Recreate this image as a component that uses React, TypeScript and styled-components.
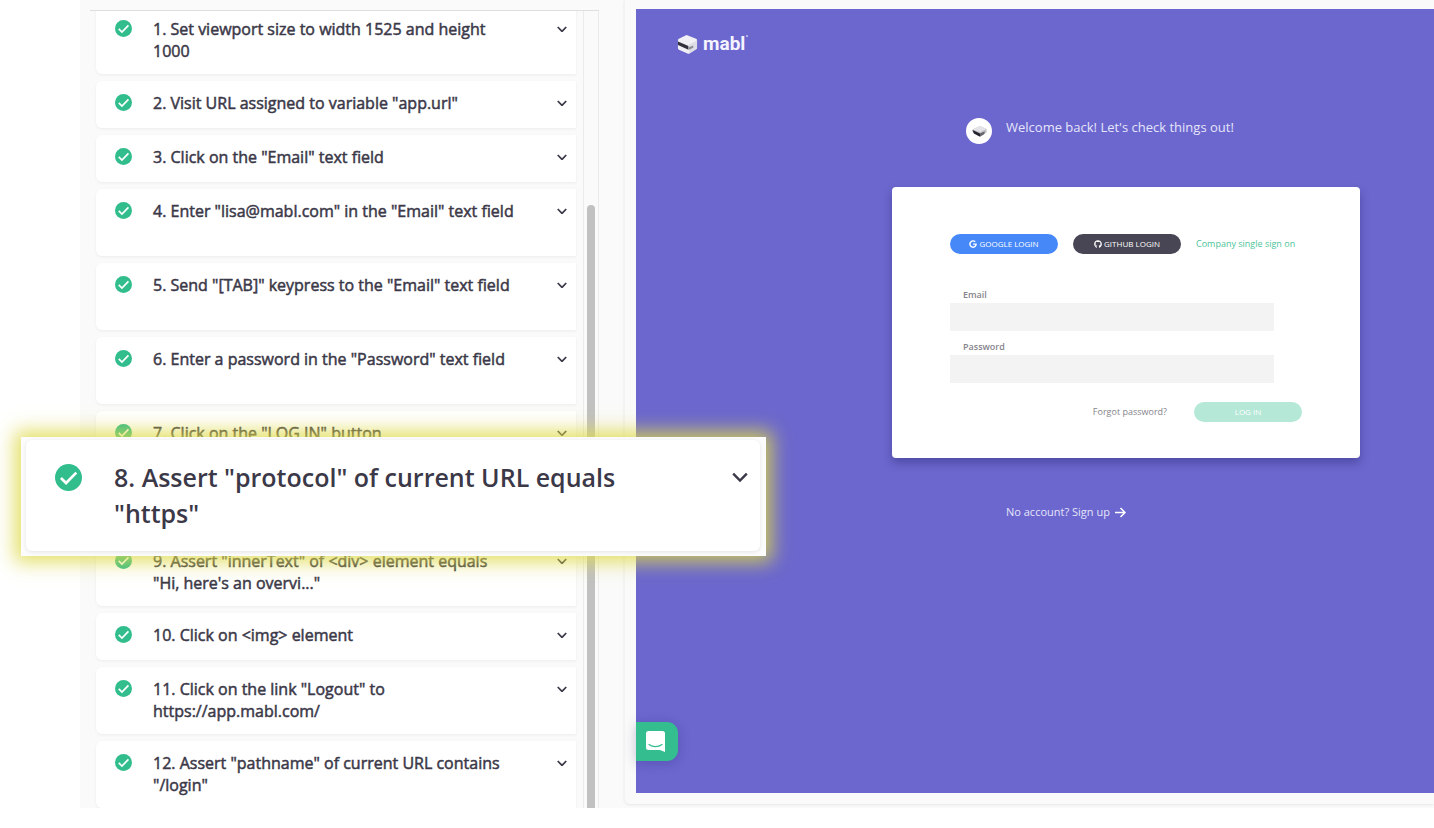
import React from "react";
import styled, { createGlobalStyle, css } from "styled-components";
import { FaGithub, FaGoogle } from "react-icons/fa";

const GlobalStyle = createGlobalStyle`
  *, *::before, *::after { box-sizing: border-box; }
  body {
    margin: 0;
    background: #fff;
    color: #3b3848;
    font-family: "Open Sans", "Noto Sans", sans-serif;
  }
  button, input { font: inherit; }
`;

const Page = styled.div`
  position: relative;
  height: 100vh;
  padding: 0 0 20px 80px;
  overflow: hidden;
`;

const Workspace = styled.div`
  display: grid;
  grid-template-columns: 544px minmax(0, 1fr);
  grid-template-rows: minmax(0, 1fr);
  height: 100%;
  overflow: hidden;
  background: #fafafa;
`;

const StepPanel = styled.section`
  display: flex;
  gap: 7px;
  margin: 10px 25px 0 10px;
  padding-left: 6px;
  border-top: 1px solid #dedede;
  overflow: hidden;
`;

const StepList = styled.ol`
  flex: 1;
  display: flex;
  flex-direction: column;
  gap: 7px;
  margin: -4px 0 0;
  padding: 0;
  list-style: none;
`;

const Step = styled.li<{ $tall?: boolean }>`
  flex: none;
  display: flex;
  align-items: flex-start;
  min-height: ${(p) => (p.$tall ? 67 : 47)}px;
  padding: 11px 7px 12px 19px;
  border-radius: 6px 0 0 6px;
  background: #fff;
  box-shadow: 0 1px 3px rgba(0, 0, 0, 0.06);
`;

const StepText = styled.p<{ $large?: boolean }>`
  flex: 1;
  margin: 0;
  white-space: pre-line;
  ${(p) =>
    p.$large
      ? css`
          padding-left: 32px;
          font-size: 25px;
          font-weight: 600;
          line-height: 36px;
        `
      : css`
          padding-left: 21px;
          font-size: 16px;
          line-height: 22px;
          -webkit-text-stroke: 0.5px currentColor;
        `}
`;

const StatusIcon = styled.svg<{ $large?: boolean }>`
  flex: none;
  width: ${(p) => (p.$large ? 27 : 17)}px;
  height: ${(p) => (p.$large ? 27 : 17)}px;
  margin-top: ${(p) => (p.$large ? 5 : 2)}px;
`;

const ExpandButton = styled.button<{ $large?: boolean }>`
  display: grid;
  place-items: center;
  flex: none;
  width: ${(p) => (p.$large ? 24 : 14)}px;
  height: ${(p) => (p.$large ? 36 : 22)}px;
  padding: 0;
  border: 0;
  background: none;
  color: #3b3848;

  svg {
    width: ${(p) => (p.$large ? 16 : 10)}px;
  }
`;

const ScrollTrack = styled.div`
  flex: none;
  width: 16px;
  padding: 194px 3px 0;
  border: solid #ebebeb;
  border-width: 0 1px;
`;

const ScrollThumb = styled.div`
  height: 100%;
  border-radius: 5px 5px 0 0;
  background: #c1c1c1;
`;

const PreviewFrame = styled.main`
  display: flex;
  margin-bottom: 4px;
  padding: 9px 0 11px 11px;
  border-left: 1px solid #f3f3f3;
  border-radius: 0 0 0 6px;
  box-shadow: 0 1px 3px rgba(0, 0, 0, 0.08);
`;

const LoginScreen = styled.div`
  position: relative;
  flex: 1;
  min-width: 0;
  padding: 25px 0 0 41px;
  background: #6b67ce;
`;

const Brand = styled.div`
  display: flex;
  align-items: center;
  gap: 5px;
  height: 20px;
  color: #f4f3ff;
  font: 700 19px/20px Roboto, sans-serif;

  svg {
    width: 21px;
    height: 22px;
  }
`;

const TradeDot = styled.span`
  align-self: flex-start;
  width: 2px;
  height: 2px;
  margin: 1px 0 0 -4px;
  border-radius: 50%;
  background: #c9c7ee;
`;

const LoginColumn = styled.div`
  width: 468px;
  margin: 63px 0 0 215px;
`;

const Welcome = styled.div`
  display: flex;
  gap: 14px;
  padding-left: 74px;
  color: #e6e5fa;
  font-size: 13px;
  line-height: 20px;
`;

const Avatar = styled.div`
  display: grid;
  place-items: center;
  width: 26px;
  height: 26px;
  margin-top: 1px;
  border-radius: 50%;
  background: #fff;

  svg {
    width: 17px;
    height: 17px;
  }
`;

const LoginCard = styled.form`
  margin-top: 43px;
  padding: 47px 58px 36px;
  border-radius: 4px;
  background: #fff;
  box-shadow: 0 5px 10px rgba(30, 25, 90, 0.35);
`;

const Providers = styled.div`
  display: flex;
  align-items: center;
  gap: 15px;
  margin-bottom: 33px;
`;

const PillButton = styled.button<{ $color: string }>`
  display: flex;
  flex: none;
  align-items: center;
  justify-content: center;
  gap: 2px;
  width: 108px;
  height: 20px;
  padding: 0;
  border: 0;
  border-radius: 10px;
  background: ${(p) => p.$color};
  color: #fff;
  font-size: 8px;
  line-height: 12px;

  svg {
    width: 8px;
    height: 8px;
  }
`;

const SsoLink = styled.a`
  color: #4cc49a;
  font-size: 9px;
  line-height: 14px;
  text-decoration: none;
  white-space: nowrap;
`;

const Field = styled.div`
  margin-bottom: 8px;
`;

const FieldLabel = styled.label`
  display: block;
  padding-left: 13px;
  color: #85848c;
  font-size: 9px;
  font-weight: 600;
  line-height: 16px;
`;

const FieldInput = styled.input`
  display: block;
  width: 324px;
  height: 28px;
  padding: 0 12px;
  border: 0;
  background: #f3f3f3;
  font-size: 12px;
`;

const Actions = styled.div`
  display: flex;
  align-items: center;
  justify-content: flex-end;
  gap: 27px;
  margin-top: 19px;
`;

const ForgotLink = styled.a`
  color: #85848c;
  font-size: 9px;
  line-height: 14px;
  text-decoration: none;
`;

const SignUpLink = styled.a`
  display: flex;
  align-items: center;
  gap: 5px;
  width: fit-content;
  margin: 46px 0 0 114px;
  color: #e6e5fa;
  font-size: 11px;
  line-height: 16px;
  text-decoration: none;

  svg {
    width: 11px;
    height: 11px;
  }
`;

const ChatButton = styled.button`
  position: absolute;
  left: 0;
  bottom: 32px;
  display: flex;
  align-items: center;
  width: 42px;
  height: 39px;
  padding: 0 0 0 10px;
  border: 0;
  border-radius: 0 11px 11px 0;
  background: #34be90;
  box-shadow: 0 2px 12px rgba(40, 20, 100, 0.25);

  svg {
    width: 19px;
    height: 21px;
  }
`;

const Callout = styled.section`
  position: absolute;
  top: 437px;
  left: 21px;
  width: 745px;
  padding: 3px 6px 5px 5px;
  background: #fcfcfc;
  box-shadow: 0 0 18px 6px rgba(222, 217, 72, 0.85);
`;

const CalloutCard = styled.div`
  display: flex;
  align-items: flex-start;
  min-height: 111px;
  padding: 19px 8px 20px 29px;
  border-radius: 6px;
  background: #fff;
  box-shadow: 0 1px 4px rgba(0, 0, 0, 0.1);
`;

function Check({ large }: { large?: boolean }) {
  return (
    <StatusIcon $large={large} viewBox="0 0 20 20" role="img" aria-label="Passed">
      <circle cx="10" cy="10" r="10" fill="#31bd8c" />
      <path d="M4.4 10.4 8.2 14.1 15.8 6.4" fill="none" stroke="#fff" strokeWidth="2" />
    </StatusIcon>
  );
}

function Expand({ large }: { large?: boolean }) {
  return (
    <ExpandButton $large={large} type="button" aria-label="Expand step">
      <svg viewBox="0 0 16 11" fill="none" stroke="currentColor" strokeWidth={large ? 2.4 : 2.8}>
        <path d="M1.2 1.6 8 8.6 14.8 1.6" />
      </svg>
    </ExpandButton>
  );
}

function BoxMark() {
  return (
    <svg viewBox="0 0 22 22" aria-hidden="true">
      <path
        d="M10 1.500 20 5.500Q21 6 21 7v8q0 1-1 1.500l-7 4.500q-1 .5-2 0L2 17q-1-.5-1-1.500V7q0-1 1-1.500z"
        fill="#f1f1f5"
      />
      <path d="M12.500 11.500 21 7v8q0 1-1 1.500l-7 4.500z" fill="#dddde6" />
      <path d="M1 8.500 12 13v4L1 12z" fill="#33313d" />
      <path d="M12.500 14.500 17 12.500v2.300L12.500 17z" fill="#8b8d97" />
    </svg>
  );
}

function AvatarMark() {
  return (
    <svg viewBox="0 0 17 17" aria-hidden="true">
      <path d="M9 3 15.500 6v3.500L9 13 1.500 9V6.500z" fill="#bdbdc4" />
      <path d="M9 3 15.500 6 9 9.200 1.500 6.300z" fill="#e4e4e8" />
      <path d="M1.500 7 9 10.600v3.200L2.800 10.600z" fill="#25242c" />
      <path d="M9 10.600 13.500 8.500v2.600L9 13.800z" fill="#66656e" />
    </svg>
  );
}

type StepData = { text: string; tall?: boolean };

const steps: StepData[] = [
  { text: "1. Set viewport size to width 1525 and height\n1000", tall: true },
  { text: '2. Visit URL assigned to variable "app.url"' },
  { text: '3. Click on the "Email" text field' },
  { text: '4. Enter "lisa@mabl.com" in the "Email" text field', tall: true },
  { text: '5. Send "[TAB]" keypress to the "Email" text field', tall: true },
  { text: '6. Enter a password in the "Password" text field', tall: true },
  { text: '7. Click on the "LOG IN" button' },
  { text: "", tall: true },
  { text: '9. Assert "innerText" of <div> element equals\n"Hi, here\'s an overvi..."', tall: true },
  { text: "10. Click on <img> element" },
  { text: '11. Click on the link "Logout" to\nhttps://app.mabl.com/', tall: true },
  { text: '12. Assert "pathname" of current URL contains\n"/login"', tall: true },
];

export default function App() {
  return (
    <Page>
      <GlobalStyle />
      <Workspace>
        <StepPanel aria-label="Test steps">
          <StepList>
            {steps.map((step, i) => (
              <Step key={i} $tall={step.tall}>
                {step.text && (
                  <>
                    <Check />
                    <StepText>{step.text}</StepText>
                    <Expand />
                  </>
                )}
              </Step>
            ))}
          </StepList>
          <ScrollTrack>
            <ScrollThumb />
          </ScrollTrack>
        </StepPanel>

        <PreviewFrame>
          <LoginScreen>
            <Brand>
              <BoxMark />
              mabl
              <TradeDot />
            </Brand>
            <LoginColumn>
              <Welcome>
                <Avatar>
                  <AvatarMark />
                </Avatar>
                Welcome back! Let's check things out!
              </Welcome>
              <LoginCard onSubmit={(e) => e.preventDefault()}>
                <Providers>
                  <PillButton type="button" $color="#4688f8">
                    <FaGoogle />
                    GOOGLE LOGIN
                  </PillButton>
                  <PillButton type="button" $color="#484554">
                    <FaGithub />
                    GITHUB LOGIN
                  </PillButton>
                  <SsoLink href="#sso">Company single sign on</SsoLink>
                </Providers>
                <Field>
                  <FieldLabel htmlFor="email">Email</FieldLabel>
                  <FieldInput id="email" type="email" />
                </Field>
                <Field>
                  <FieldLabel htmlFor="password">Password</FieldLabel>
                  <FieldInput id="password" type="password" />
                </Field>
                <Actions>
                  <ForgotLink href="#forgot">Forgot password?</ForgotLink>
                  <PillButton type="submit" $color="#b5e8d7">
                    LOG IN
                  </PillButton>
                </Actions>
              </LoginCard>
              <SignUpLink href="#signup">
                No account? Sign up
                <svg viewBox="0 0 11 11" fill="none" stroke="#fff" strokeWidth="1.500" aria-hidden="true">
                  <path d="M0 5.500H10M5.500 1 10 5.500 5.500 10" />
                </svg>
              </SignUpLink>
            </LoginColumn>
            <ChatButton type="button" aria-label="Open chat">
              <svg viewBox="0 0 19 21" aria-hidden="true">
                <path d="M2.500 0h14A2.500 2.500 0 0 1 19 2.500V21l-5-2H2.500A2.500 2.500 0 0 1 0 16.500v-14A2.500 2.500 0 0 1 2.500 0z" fill="#fff" />
                <path d="M3 13.500c3.800 2.800 9.200 2.800 13 0" fill="none" stroke="#34be90" strokeWidth="1.200" strokeLinecap="round" />
              </svg>
            </ChatButton>
          </LoginScreen>
        </PreviewFrame>
      </Workspace>

      <Callout aria-label="Highlighted step">
        <CalloutCard>
          <Check large />
          <StepText $large>{'8. Assert "protocol" of current URL equals\n"https"'}</StepText>
          <Expand large />
        </CalloutCard>
      </Callout>
    </Page>
  );
}
